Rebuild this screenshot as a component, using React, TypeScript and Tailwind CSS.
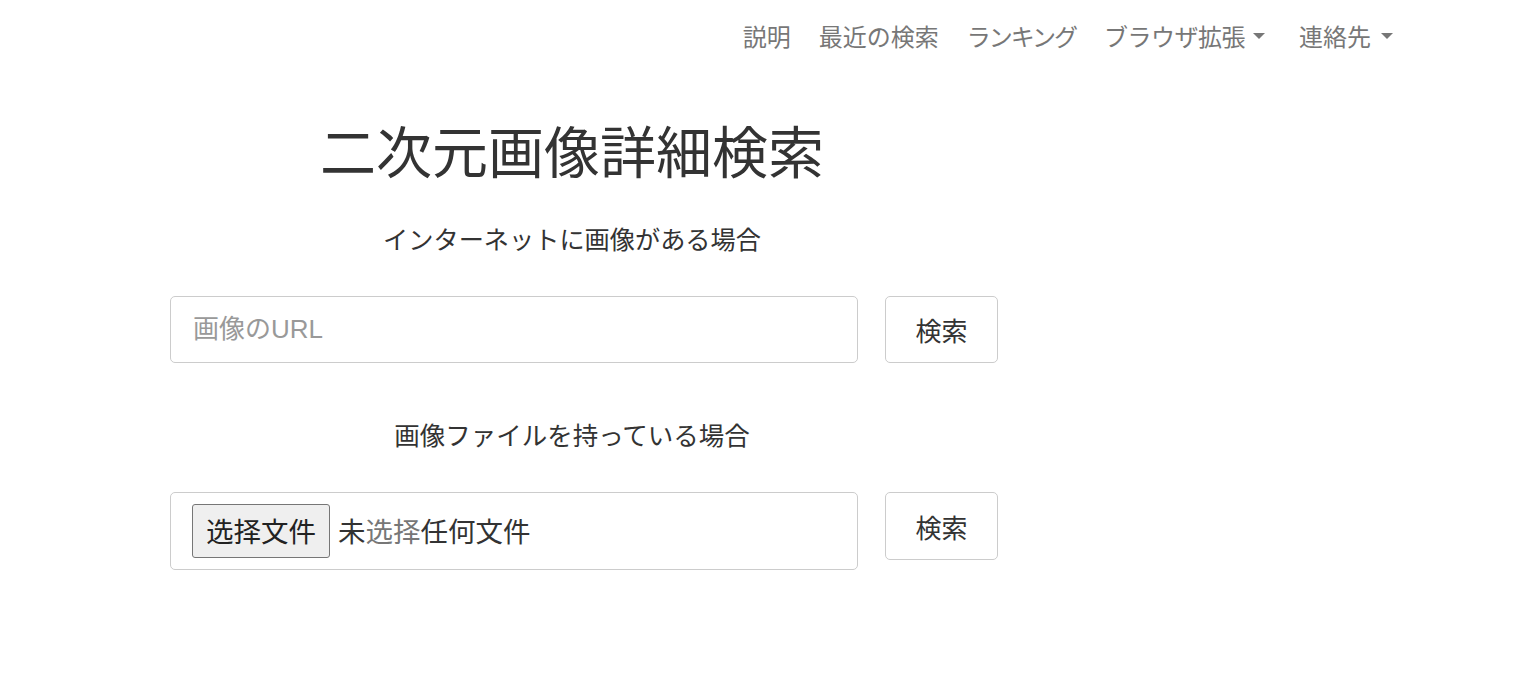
const font = { fontFamily: '"Noto Sans CJK JP", "Noto Sans", sans-serif' };
const latin = { fontFamily: '"Liberation Sans", "Noto Sans CJK JP", sans-serif' };

function Caret({ ml }: { ml: string }) {
  return <span className={`${ml} inline-block h-0 w-0 border-x-[6px] border-t-[6px] border-x-transparent border-t-[#777]`} />;
}

function NavBar() {
  return (
    <nav className="flex h-[72px] items-center justify-end gap-[28px] pr-[128px] text-[24px] text-[#777]">
      <a>説明</a>
      <a>最近の検索</a>
      <a className="tracking-[-2px]">ランキング</a>
      <a className="flex items-center tracking-[-0.5px]">ブラウザ拡張<Caret ml="ml-[8px]" /></a>
      <a className="ml-[6px] flex items-center">連絡先<Caret ml="ml-[10px]" /></a>
    </nav>
  );
}

function SearchButton({ h }: { h: string }) {
  return (
    <button className={`w-[113px] ${h} rounded-[5px] border border-[#ccc] bg-white text-[26px] text-[#333]`}>
      検索
    </button>
  );
}

export default function App() {
  return (
    <div className="min-h-screen bg-white text-[#333]" style={font}>
      <NavBar />
      <main className="pl-[170px]">
        <div className="w-[804px] text-center">
          <h1 className="mt-[49px] text-[56px] leading-none">二次元画像詳細検索</h1>
          <p className="mt-[48px] text-[25.2px] leading-[27px]">インターネットに画像がある場合</p>
        </div>
        <div className="mt-[44px] flex items-start gap-[27px]">
          <div className="flex h-[67px] w-[688px] items-center rounded-[5px] border border-[#ccc] px-[22px] text-[26px] text-[#999]" style={latin}>
            画像のURL
          </div>
          <SearchButton h="h-[67px]" />
        </div>
        <div className="w-[804px] text-center">
          <p className="mt-[57px] text-[25.5px] leading-[27px]">画像ファイルを持っている場合</p>
        </div>
        <div className="mt-[45px] flex items-start gap-[27px]">
          <div className="flex h-[78px] w-[688px] items-center rounded-[5px] border border-[#ccc] px-[21px] text-[27.5px]">
            <span className="flex h-[54px] items-center rounded-[3px] border border-[#767676] bg-[#efefef] px-[13px] text-[#222]">
              选择文件
            </span>
            <span className="ml-[8px] text-[#333]">
              未<span className="text-[#777]">选择</span>任何文件
            </span>
          </div>
          <SearchButton h="h-[68px]" />
        </div>
      </main>
    </div>
  );
}
